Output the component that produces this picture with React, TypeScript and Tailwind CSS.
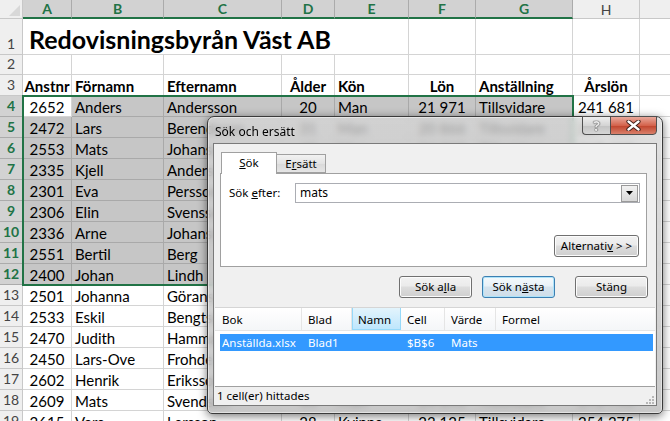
import React from "react";

const colW = ["w-[49px]", "w-[92px]", "w-[118px]", "w-[53px]", "w-[74px]", "w-[67px]", "w-[97px]", "w-[67px]", "w-[100px]"];
const colAlign = ["justify-center", "justify-start pl-[3px]", "justify-start pl-[3px]", "justify-center", "justify-start pl-[3px]", "justify-center", "justify-start pl-[3px]", "justify-center", "justify-start"];
const letters = ["A", "B", "C", "D", "E", "F", "G", "H", ""];

const headers = ["Anstnr", "Förnamn", "Efternamn", "Ålder", "Kön", "Lön", "Anställning", "Årslön", ""];

const people = [
  ["2652", "Anders", "Andersson", "20", "Man", "21 971", "Tillsvidare", "241 681"],
  ["2472", "Lars", "Berendsson", "31", "Man", "20 866", "Tillsvidare", "229 526"],
  ["2553", "Mats", "Johansson", "45", "Man", "24 310", "Tillsvidare", "267 410"],
  ["2335", "Kjell", "Andersson", "52", "Man", "26 540", "Tillsvidare", "291 940"],
  ["2301", "Eva", "Persson", "38", "Kvinna", "23 120", "Tillsvidare", "254 320"],
  ["2306", "Elin", "Svensson", "27", "Kvinna", "21 450", "Visstid", "235 950"],
  ["2336", "Arne", "Johansson", "61", "Man", "27 800", "Tillsvidare", "305 800"],
  ["2551", "Bertil", "Berg", "49", "Man", "25 100", "Tillsvidare", "276 100"],
  ["2400", "Johan", "Lindh", "33", "Man", "22 640", "Tillsvidare", "249 040"],
  ["2501", "Johanna", "Göransson", "29", "Kvinna", "21 980", "Visstid", "241 780"],
  ["2533", "Eskil", "Bengtsson", "56", "Man", "26 210", "Tillsvidare", "288 310"],
  ["2470", "Judith", "Hammarström", "41", "Kvinna", "24 005", "Tillsvidare", "264 055"],
  ["2450", "Lars-Ove", "Frohde", "58", "Man", "25 760", "Tillsvidare", "283 360"],
  ["2602", "Henrik", "Eriksson", "36", "Man", "23 480", "Tillsvidare", "258 280"],
  ["2609", "Mats", "Svendsen", "44", "Man", "24 890", "Tillsvidare", "273 790"],
  ["2615", "Vera", "Larsson", "28", "Kvinna", "23 125", "Tillsvidare", "254 375"],
];

function RowHead({ n, sel, h }: { n: number; sel?: boolean; h: string }) {
  return (
    <div
      className={`w-[23px] ${h} shrink-0 flex items-end justify-center pb-[3px] leading-[14px] border-r border-b text-[14px] ${
        sel ? "bg-[#d2d2d2] border-[#ababab] text-[#217346] font-bold" : "bg-[#efefef] border-[#c8c8c8] text-[#444]"
      }`}
    >
      {n}
    </div>
  );
}

function SheetRow({ n, cells, h, selected, bold }: { n: number; cells: string[]; h: string; selected?: boolean; bold?: boolean }) {
  return (
    <div className="flex">
      <RowHead n={n} sel={selected} h={h} />
      {colW.map((w, i) => {
        const inSel = selected && i < 7;
        const active = selected && n === 4 && i === 0;
        return (
          <div
            key={i}
            className={`${w} ${h} shrink-0 flex items-end pb-[1px] leading-[15px] border-r border-b whitespace-nowrap overflow-hidden ${colAlign[i]} ${
              inSel && !active ? "bg-[#c6c6c6] border-[#a9a9a9]" : "bg-white border-[#d4d4d4]"
            }`}
          >
            {bold && cells[i] ? <span className="font-bold underline underline-offset-[3px] decoration-[1px]">{cells[i]}</span> : cells[i]}
          </div>
        );
      })}
    </div>
  );
}

function WinButton({ children, focused, w = "w-[73px]" }: { children: React.ReactNode; focused?: boolean; w?: string }) {
  return (
    <div
      className={`${w} h-[22px] rounded-[3px] border flex items-center justify-center text-black ${
        focused
          ? "border-[#3c7fb1] bg-[linear-gradient(180deg,#f4f9fc_0%,#e8f1f7_45%,#d6e4ee_50%,#cfdde8_100%)] shadow-[inset_0_0_0_1px_#aee3fa]"
          : "border-[#707070] bg-[linear-gradient(180deg,#f2f2f2_0%,#ebebeb_45%,#dddddd_50%,#cfcfcf_100%)] shadow-[inset_0_0_0_1px_#fcfcfc]"
      }`}
    >
      {children}
    </div>
  );
}

export default function App() {
  return (
    <div className="relative w-[670px] h-[421px] overflow-hidden bg-white font-['Lato',sans-serif] text-[15px] text-black">
      {/* column headers */}
      <div className="flex h-[19px]">
        <div className="w-[23px] h-[19px] shrink-0 bg-[#efefef] border-r border-b border-[#c8c8c8] relative">
          <svg className="absolute right-[2px] bottom-[2px]" width="11" height="11" viewBox="0 0 11 11">
            <path d="M11 0 L11 11 L0 11 Z" fill="#d8d8d8" />
          </svg>
        </div>
        {colW.map((w, i) => (
          <div
            key={i}
            className={`${w} h-[19px] shrink-0 flex items-center justify-center border-r text-[14px] ${
              i < 7
                ? "bg-[#d2d2d2] border-[#ababab] border-b-2 border-b-[#217346] text-[#217346] font-bold"
                : "bg-[#efefef] border-[#c8c8c8] border-b text-[#444]"
            }`}
          >
            {letters[i]}
          </div>
        ))}
      </div>

      {/* row 1 title */}
      <div className="flex">
        <RowHead n={1} h="h-[36px]" />
        {colW.map((w, i) => (
          <div key={i} className={`${w} h-[36px] shrink-0 flex items-end border-b border-[#d4d4d4] ${i < 4 ? "" : "border-r"} whitespace-nowrap`}>
            {i === 0 && <span className="pl-[6px] pb-[2px] text-[25px] font-bold leading-none">Redovisningsbyrån Väst AB</span>}
          </div>
        ))}
      </div>
      <SheetRow n={2} cells={[]} h="h-[20px]" />
      <SheetRow n={3} cells={headers} h="h-[21px]" bold />
      {people.map((p, idx) => (
        <SheetRow key={idx} n={idx + 4} cells={p} h="h-[21px]" selected={idx + 4 <= 12} />
      ))}

      {/* selection border */}
      <div className="absolute left-[22px] top-[95px] w-[552px] h-[191px] border-2 border-[#217346] pointer-events-none" />

      {/* dialog */}
      <div className="absolute left-[207px] top-[116px] w-[456px] h-[298px] rounded-t-[7px] rounded-b-[5px] border border-[#3a3a3a] bg-[linear-gradient(180deg,rgba(214,214,214,0.72),rgba(188,188,188,0.8))] backdrop-blur-[3px] shadow-[0_2px_10px_rgba(0,0,0,0.55),inset_0_0_0_1px_rgba(255,255,255,0.45)] flex flex-col font-['Noto_Sans',sans-serif] text-[11.5px]">
        <div className="h-[26px] flex items-start justify-between shrink-0">
          <span className="pl-[7px] pt-[6px] text-[12px] text-black">Sök och ersätt</span>
          <div className="flex mr-[5px] -mt-px">
            <div className="w-[28px] h-[19px] rounded-bl-[4px] border border-[#4f4f4f] border-r-0 bg-[linear-gradient(180deg,#eeeeee,#d4d4d4_50%,#c2c2c2_51%,#d6d6d6)] flex items-center justify-center">
              <span className="text-[14px] leading-none font-bold text-[#e8e8e8] [text-shadow:0_0_1px_#555,0_0_1px_#555,0_0_1px_#555]">?</span>
            </div>
            <div className="w-[47px] h-[19px] rounded-br-[4px] border border-[#4f4f4f] bg-[linear-gradient(180deg,#e9a99c,#d4634c_50%,#c0432b_51%,#d9806b)] flex items-center justify-center">
              <svg width="15" height="11" viewBox="0 0 15 11">
                <path d="M2.5 1.5 L12.5 9.5 M12.5 1.5 L2.5 9.5" stroke="#3a1a14" strokeWidth="4.2" strokeLinecap="round" />
                <path d="M2.5 1.5 L12.5 9.5 M12.5 1.5 L2.5 9.5" stroke="#ffffff" strokeWidth="2.4" strokeLinecap="round" />
              </svg>
            </div>
          </div>
        </div>

        <div className="mx-[5px] h-[263px] border border-[#7a7a7a] bg-[#f0f0f0] flex flex-col">
          {/* tabs */}
          <div className="flex items-end pl-[7px] mt-[7px] h-[22px]">
            <div className="relative z-10 w-[56px] h-[22px] -mb-px bg-white border border-b-0 border-[#a0a0a0] flex items-center justify-center pb-[1px]">
              <span>
                <span className="underline">S</span>ök
              </span>
            </div>
            <div className="w-[49px] h-[19px] border border-l-0 border-[#a0a0a0] bg-[linear-gradient(180deg,#f2f2f2,#e3e3e3_50%,#d9d9d9_51%,#e5e5e5)] flex items-center justify-center">
              <span>
                E<span className="underline">r</span>sätt
              </span>
            </div>
          </div>
          <div className="ml-[6px] w-[427px] h-[94px] bg-white border border-[#a0a0a0] flex flex-col">
            <div className="flex items-center mt-[9px] h-[20px]">
              <span className="pl-[8px] w-[74px]">
                Sök <span className="underline">e</span>fter:
              </span>
              <div className="w-[345px] h-[20px] border border-[#abadb3] flex items-center justify-between pl-[4px] pr-px">
                <span className="text-[12px]">mats</span>
                <div className="w-[17px] h-[17px] border border-[#9a9a9a] bg-[linear-gradient(180deg,#f2f2f2,#d8d8d8)] flex items-center justify-center">
                  <svg width="7" height="4" viewBox="0 0 7 4">
                    <path d="M0 0 L7 0 L3.5 4 Z" fill="#000" />
                  </svg>
                </div>
              </div>
            </div>
            <div className="flex justify-end mt-[32px] pr-[7px]">
              <WinButton w="w-[85px]">
                <span>
                  Alternati<span className="underline">v</span> &gt; &gt;
                </span>
              </WinButton>
            </div>
          </div>

          {/* buttons */}
          <div className="flex justify-end pr-[8px] mt-[9px]">
            <WinButton>
              <span>
                Sök a<span className="underline">l</span>la
              </span>
            </WinButton>
            <div className="w-[10px]" />
            <WinButton focused>
              <span>
                Sök n<span className="underline">ä</span>sta
              </span>
            </WinButton>
            <div className="w-[20px]" />
            <WinButton>Stäng</WinButton>
          </div>

          {/* results list */}
          <div className="mx-px mt-[9px] flex-1 bg-white border-t border-[#d5d5d5] flex flex-col">
            <div className="flex h-[23px] bg-[linear-gradient(180deg,#ffffff,#f4f6f8)] border-b border-[#e5e5e5] shrink-0">
              <div className="w-[87px] pl-[7px] flex items-center pt-[2px] border-r border-[#e5e5e5]">Bok</div>
              <div className="w-[50px] pl-[6px] flex items-center pt-[2px] border-r border-[#e5e5e5]">Blad</div>
              <div className="w-[49px] pl-[5px] flex items-center pt-[2px] border border-t-0 border-[#96d9f9] bg-[linear-gradient(180deg,#e3f4fc,#bee6fd)]">Namn</div>
              <div className="w-[44px] pl-[6px] flex items-center pt-[2px] border-r border-[#e5e5e5]">Cell</div>
              <div className="w-[51px] pl-[6px] flex items-center pt-[2px] border-r border-[#e5e5e5]">Värde</div>
              <div className="flex-1 pl-[6px] flex items-center pt-[2px]">Formel</div>
            </div>
            <div className="mt-[3px] ml-[5px] mr-[2px] h-[17px] bg-[#3399ff] text-white flex items-center">
              <div className="w-[82px] pl-[2px]">Anställda.xlsx</div>
              <div className="w-[50px] pl-[6px]">Blad1</div>
              <div className="w-[49px]" />
              <div className="w-[44px] pl-[6px]">$B$6</div>
              <div className="w-[51px] pl-[6px]">Mats</div>
            </div>
            <div className="flex-1" />
            <div className="h-[19px] bg-[#f0f0f0] border-t border-[#a0a0a0] flex items-center justify-between pl-[2px] shrink-0">
              <span>1 cell(er) hittades</span>
              <svg width="10" height="10" viewBox="0 0 10 10" className="self-end mb-[1px] mr-[1px]">
                <g fill="#b8b8b8">
                  <rect x="8" y="2" width="2" height="2" />
                  <rect x="5" y="5" width="2" height="2" />
                  <rect x="8" y="5" width="2" height="2" />
                  <rect x="2" y="8" width="2" height="2" />
                  <rect x="5" y="8" width="2" height="2" />
                  <rect x="8" y="8" width="2" height="2" />
                </g>
              </svg>
            </div>
          </div>
        </div>
      </div>
    </div>
  );
}
